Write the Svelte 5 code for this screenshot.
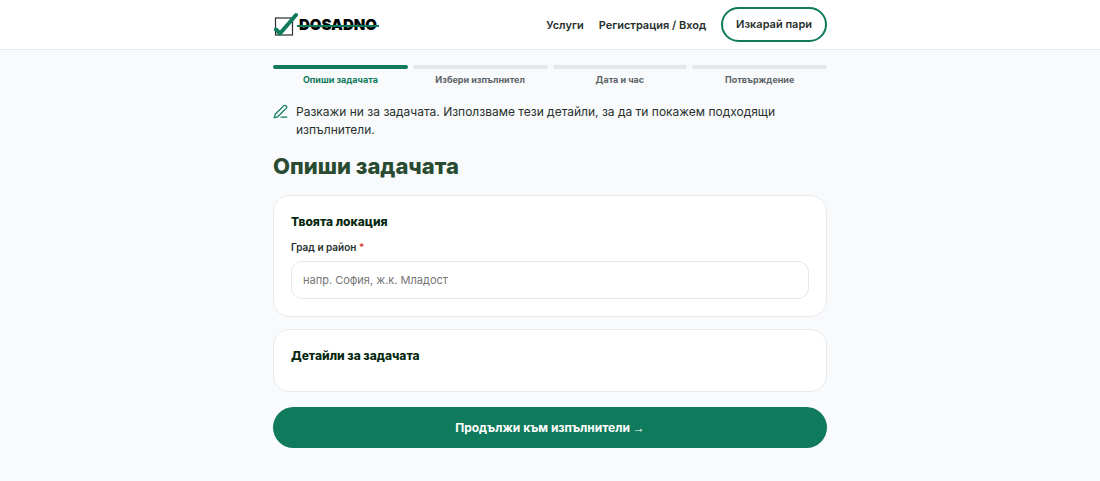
<script lang="ts">
  const steps = ['Опиши задачата', 'Избери изпълнител', 'Дата и час', 'Потвърждение'];

  let current = $state(0);
  let location = $state('');
</script>

<div class="page">
  <header class="header">
    <div class="container header-inner">
      <a class="logo" href="/" aria-label="Dosadno">
        <svg class="logo-check" viewBox="0 0 25 26" fill="none" aria-hidden="true">
          <rect x="2.5" y="6" width="17" height="17" stroke="#27302d" stroke-width="1.2" />
          <path d="M3 17.5L7 21.5L23 3" stroke="#0f7a5c" stroke-width="4" stroke-linecap="round" stroke-linejoin="round" />
        </svg>
        <span class="logo-text">DOSADNO</span>
      </a>
      <nav class="nav">
        <a class="nav-link" href="/services">Услуги</a>
        <a class="nav-link" href="/login">Регистрация / Вход</a>
        <a class="nav-cta" href="/earn">Изкарай пари</a>
      </nav>
    </div>
  </header>

  <main class="container main">
    <ol class="steps">
      {#each steps as step, i}
        <li class="step" class:active={i === current}>
          <span class="step-bar"></span>
          <span class="step-label">{step}</span>
        </li>
      {/each}
    </ol>

    <div class="intro">
      <svg class="intro-icon" viewBox="0 0 24 24" fill="none" stroke="currentColor" stroke-width="2" stroke-linecap="round" stroke-linejoin="round" aria-hidden="true">
        <path d="M13 21h9" />
        <path d="M17 3a2.8 2.8 0 0 1 4 4L7.5 20.5 2 22l1.5-5.5Z" />
      </svg>
      <p>Разкажи ни за задачата. Използваме тези детайли, за да ти покажем подходящи изпълнители.</p>
    </div>

    <h1>Опиши задачата</h1>

    <form onsubmit={(e) => e.preventDefault()}>
      <section class="card">
        <h2>Твоята локация</h2>
        <label for="location">Град и район <span class="required">*</span></label>
        <input id="location" type="text" placeholder="напр. София, ж.к. Младост" bind:value={location} />
      </section>

      <section class="card details">
        <h2>Детайли за задачата</h2>
      </section>

      <button class="submit" type="submit">Продължи към изпълнители <span class="arrow">→</span></button>
    </form>
  </main>
</div>

<style>
  :global(body) {
    margin: 0;
    background: #f9fafc;
  }

  .page {
    font-family: Inter, 'Liberation Sans', sans-serif;
    color: #27302d;
  }

  .container {
    box-sizing: border-box;
    max-width: 586px;
    margin: 0 auto;
    padding: 0 16px;
  }

  .header {
    background: #fff;
    border-bottom: 1px solid #e8ebee;
  }

  .header-inner {
    display: flex;
    align-items: center;
    justify-content: space-between;
    min-height: 49px;
  }

  .logo {
    display: flex;
    align-items: center;
    gap: 1px;
    text-decoration: none;
    color: #000;
  }

  .logo-check {
    width: 25px;
    height: 26px;
  }

  .logo-text {
    position: relative;
    font-size: 15px;
    line-height: 20px;
    font-weight: 900;
  }

  .logo-text::after {
    content: '';
    position: absolute;
    left: -2px;
    right: -2px;
    top: 10px;
    height: 2px;
    background: #0f7a5c;
  }

  .nav {
    display: flex;
    align-items: center;
    gap: 15px;
    font-size: 11px;
    font-weight: 600;
  }

  .nav a {
    color: #27302d;
    text-decoration: none;
  }

  .nav .nav-cta {
    padding: 0 13px;
    line-height: 31px;
    border: 2px solid #0f7a5c;
    border-radius: 18px;
  }

  .main {
    padding-top: 15px;
    padding-bottom: 33px;
  }

  .steps {
    display: grid;
    grid-template-columns: repeat(4, 1fr);
    gap: 5px;
    margin: 0 0 17px;
    padding: 0;
    list-style: none;
  }

  .step {
    display: flex;
    flex-direction: column;
    gap: 5px;
    text-align: center;
    color: #5c6468;
  }

  .step-bar {
    height: 4px;
    border-radius: 2px;
    background: #e5e7e9;
  }

  .step-label {
    font-size: 9px;
    line-height: 12px;
    font-weight: 700;
  }

  .step.active {
    color: #0f7a5c;
  }

  .step.active .step-bar {
    background: #0f7a5c;
  }

  .intro {
    display: flex;
    gap: 8px;
    margin-bottom: 12px;
  }

  .intro-icon {
    flex: none;
    width: 15px;
    height: 15px;
    margin-top: 1px;
    color: #0f7a5c;
  }

  .intro p {
    margin: 0;
    font-size: 12px;
    line-height: 18px;
  }

  h1 {
    margin: 0 0 14px;
    font-size: 22px;
    line-height: 30px;
    font-weight: 800;
    color: #284b31;
  }

  .card {
    margin-bottom: 12px;
    padding: 17px;
    background: #fff;
    border: 1px solid #e8ebee;
    border-radius: 16px;
  }

  .details {
    margin-bottom: 15px;
    padding-bottom: 26px;
  }

  h2 {
    margin: 0;
    font-size: 12px;
    line-height: 18px;
    font-weight: 800;
    color: #06280f;
  }

  label {
    display: block;
    margin: 9px 0 7px;
    font-size: 10px;
    line-height: 14px;
    font-weight: 600;
  }

  .required {
    color: #d63a2f;
  }

  input {
    display: block;
    box-sizing: border-box;
    width: 100%;
    height: 38px;
    padding: 0 11px;
    border: 1px solid #e5e8eb;
    border-radius: 11px;
    background: #fff;
    font-family: inherit;
    font-size: 11px;
    color: inherit;
  }

  input::placeholder {
    color: #757575;
  }

  .submit {
    display: block;
    width: 100%;
    padding: 0 16px;
    border: 0;
    border-radius: 21px;
    background: #0f7a5c;
    font-family: inherit;
    font-size: 12px;
    line-height: 41px;
    font-weight: 700;
    color: #fff;
    cursor: pointer;
  }

  .arrow {
    font-family: 'Liberation Sans', sans-serif;
    line-height: 1;
  }
</style>
